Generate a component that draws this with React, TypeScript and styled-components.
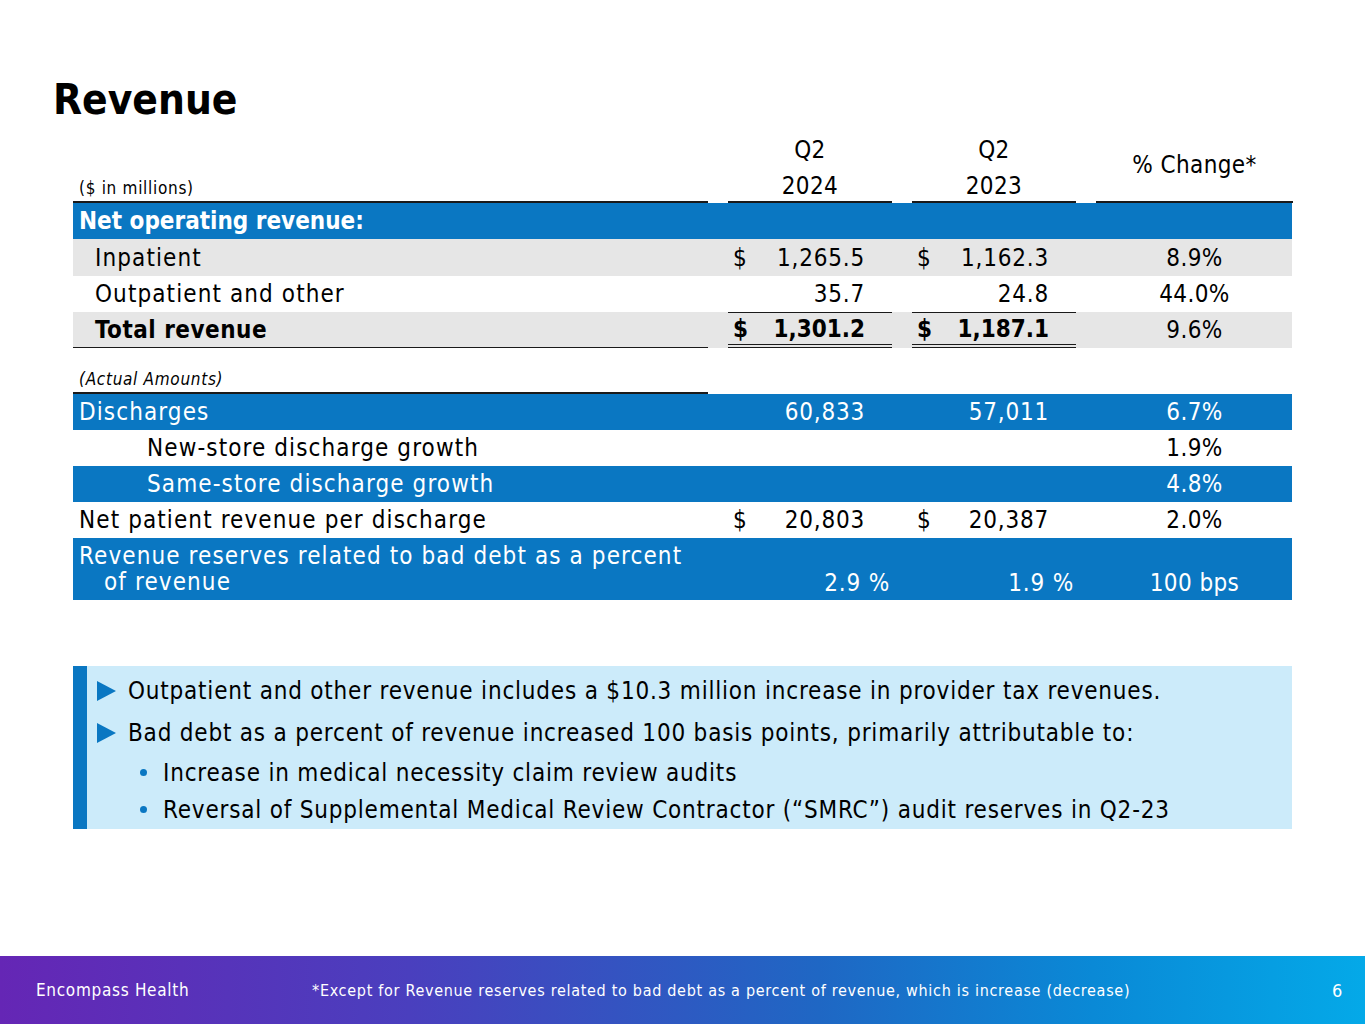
import React from "react";
import styled, { createGlobalStyle, css } from "styled-components";

const Global = createGlobalStyle`
  html, body { margin: 0; padding: 0; background: #fff; }
  body {
    font-family: "DejaVu Sans Condensed", "DejaVu Sans", sans-serif;
    font-stretch: condensed;
    color: #000;
    letter-spacing: 0.8px;
  }
`;

const BLUE = "#0a77c2";

const Page = styled.div`
  width: 1365px;
  height: 1024px;
  display: flex;
  flex-direction: column;
  overflow: hidden;
`;

const Main = styled.main`
  flex: 1;
  display: flex;
  flex-direction: column;
  padding: 70px 73px 0 73px;
`;

const Title = styled.h1`
  margin: 0 0 0 -20px;
  font-size: 42px;
  font-weight: 700;
  line-height: 60px;
  letter-spacing: 0;
  color: #000;
`;

const Table = styled.div`
  margin-top: 5px;
  width: 1219px;
  display: flex;
  flex-direction: column;
`;

const Row = styled.div<{ $bg?: "blue" | "grey" | "white"; $h?: number }>`
  display: grid;
  grid-template-columns: 635px 164px 164px 197px;
  column-gap: 20px;
  height: ${(p) => p.$h ?? 36}px;
  background: ${(p) =>
    p.$bg === "blue" ? BLUE : p.$bg === "grey" ? "#e6e6e6" : "#fff"};
  color: ${(p) => (p.$bg === "blue" ? "#fff" : "#000")};
  font-size: 24px;
`;

const HeaderRow = styled.div`
  display: grid;
  grid-template-columns: 635px 164px 164px 197px;
  grid-template-rows: 68px;
  column-gap: 20px;
  height: 68px;
`;

const HeadCell = styled.div<{ $align?: "left" | "center" | "end"; $pb?: number }>`
  box-sizing: border-box;
  min-height: 0;
  border-bottom: 2px solid #1a1a1a;
  display: flex;
  flex-direction: column;
  justify-content: ${(p) => (p.$align === "center" ? "center" : "flex-end")};
  align-items: ${(p) => (p.$align === "left" ? "flex-start" : "center")};
  font-size: 24px;
  line-height: 36px;
  letter-spacing: 0.4px;
  padding-bottom: ${(p) => p.$pb ?? 0}px;
`;

const HeadStack = styled.div`
  display: flex;
  flex-direction: column;
  align-items: center;
  margin-bottom: -3px;
`;

const SmallNote = styled.span<{ $italic?: boolean }>`
  font-size: 17px;
  line-height: 20px;
  letter-spacing: 0.7px;
  font-style: ${(p) => (p.$italic ? "italic" : "normal")};
  padding-left: 6px;
`;

const Label = styled.div<{ $indent?: number; $bold?: boolean }>`
  display: flex;
  align-items: center;
  padding-left: ${(p) => p.$indent ?? 6}px;
  font-weight: ${(p) => (p.$bold ? 700 : 400)};
  letter-spacing: ${(p) => (p.$bold ? "0" : "1.1px")};
  white-space: nowrap;
`;

const TwoLineLabel = styled.div`
  display: flex;
  flex-direction: column;
  justify-content: center;
  padding-left: 6px;
  line-height: 26px;
  letter-spacing: 1.1px;
  white-space: nowrap;
  & > span + span { padding-left: 25px; }
`;

const ValueCell = styled.div<{
  $top?: boolean;
  $double?: boolean;
  $bold?: boolean;
  $end?: boolean;
  $pr?: number;
}>`
  display: flex;
  align-items: ${(p) => (p.$end ? "flex-end" : "center")};
  justify-content: space-between;
  padding: 0 ${(p) => p.$pr ?? 27}px ${(p) => (p.$end ? "3px" : "0")} 5px;
  font-weight: ${(p) => (p.$bold ? 700 : 400)};
  letter-spacing: ${(p) => (p.$bold ? "0" : "0.8px")};
  ${(p) =>
    p.$top &&
    css`
      border-top: 1.5px solid #1a1a1a;
    `}
  ${(p) =>
    p.$double &&
    css`
      border-bottom: 4px double #1a1a1a;
    `}
`;

const PctCell = styled.div<{ $end?: boolean }>`
  display: flex;
  align-items: ${(p) => (p.$end ? "flex-end" : "center")};
  justify-content: center;
  letter-spacing: 0.4px;
  padding-bottom: ${(p) => (p.$end ? "3px" : "0")};
`;

const LabelLine = styled.div`
  border-bottom: 1.5px solid #1a1a1a;
  display: flex;
  align-items: center;
  padding-left: 22px;
  font-weight: 700;
  letter-spacing: 0.5px;
`;

const NoteRow = styled.div`
  display: grid;
  grid-template-columns: 635px 1fr;
  height: 46px;
`;

const NoteCell = styled.div`
  border-bottom: 2px solid #1a1a1a;
  display: flex;
  align-items: flex-end;
  padding-bottom: 3px;
`;

const Callout = styled.section`
  margin-top: 66px;
  width: 1219px;
  box-sizing: border-box;
  background: #ccebfa;
  border-left: 14px solid ${BLUE};
  padding: 4px 0 1px 10px;
  display: flex;
  flex-direction: column;
`;

const Bullet = styled.div<{ $sub?: boolean }>`
  display: flex;
  align-items: center;
  font-size: 24px;
  height: ${(p) => (p.$sub ? 37 : 42)}px;
  padding-left: ${(p) => (p.$sub ? 43 : 0)}px;
  gap: ${(p) => (p.$sub ? 16 : 12)}px;
  white-space: nowrap;
`;

const Tri = styled.span`
  width: 0;
  height: 0;
  border-top: 10px solid transparent;
  border-bottom: 10px solid transparent;
  border-left: 19px solid ${BLUE};
  flex: none;
`;

const Dot = styled.span`
  width: 7px;
  height: 7px;
  border-radius: 50%;
  background: ${BLUE};
  flex: none;
`;

const Footer = styled.footer`
  height: 68px;
  flex: none;
  background: linear-gradient(90deg, #6526b5 0%, #4a3fbe 30%, #1f67c4 60%, #0a89d6 80%, #04a9e8 100%);
  color: #fff;
  display: flex;
  align-items: center;
  padding: 0 22px 0 36px;
  font-size: 17px;
  letter-spacing: 0.7px;
`;

const Brand = styled.span`
  width: 276px;
  flex: none;
`;

const Footnote = styled.span`
  font-size: 16px;
  flex: 1;
  white-space: nowrap;
`;

const PageNum = styled.span`
  font-size: 18px;
`;

export default function App() {
  return (
    <Page>
      <Global />
      <Main>
        <Title>Revenue</Title>
        <Table>
          <HeaderRow>
            <HeadCell $align="left" $pb={3}>
              <SmallNote>($ in millions)</SmallNote>
            </HeadCell>
            <HeadCell $align="end">
              <HeadStack>
                <span>Q2</span>
                <span>2024</span>
              </HeadStack>
            </HeadCell>
            <HeadCell $align="end">
              <HeadStack>
                <span>Q2</span>
                <span>2023</span>
              </HeadStack>
            </HeadCell>
            <HeadCell $align="center" $pb={6}>
              <span>% Change*</span>
            </HeadCell>
          </HeaderRow>
          <Row $bg="blue">
            <Label $bold>Net operating revenue:</Label>
          </Row>
          <Row $bg="grey" $h={37}>
            <Label $indent={22}>Inpatient</Label>
            <ValueCell>
              <span>$</span>
              <span>1,265.5</span>
            </ValueCell>
            <ValueCell>
              <span>$</span>
              <span>1,162.3</span>
            </ValueCell>
            <PctCell>8.9%</PctCell>
          </Row>
          <Row $bg="white">
            <Label $indent={22}>Outpatient and other</Label>
            <ValueCell>
              <span />
              <span>35.7</span>
            </ValueCell>
            <ValueCell>
              <span />
              <span>24.8</span>
            </ValueCell>
            <PctCell>44.0%</PctCell>
          </Row>
          <Row $bg="grey" $h={36}>
            <LabelLine>Total revenue</LabelLine>
            <ValueCell $top $double $bold>
              <span>$</span>
              <span>1,301.2</span>
            </ValueCell>
            <ValueCell $top $double $bold>
              <span>$</span>
              <span>1,187.1</span>
            </ValueCell>
            <PctCell>9.6%</PctCell>
          </Row>
          <NoteRow>
            <NoteCell>
              <SmallNote $italic>(Actual Amounts)</SmallNote>
            </NoteCell>
          </NoteRow>
          <Row $bg="blue">
            <Label>Discharges</Label>
            <ValueCell>
              <span />
              <span>60,833</span>
            </ValueCell>
            <ValueCell>
              <span />
              <span>57,011</span>
            </ValueCell>
            <PctCell>6.7%</PctCell>
          </Row>
          <Row $bg="white">
            <Label $indent={74}>New-store discharge growth</Label>
            <div />
            <div />
            <PctCell>1.9%</PctCell>
          </Row>
          <Row $bg="blue">
            <Label $indent={74}>Same-store discharge growth</Label>
            <div />
            <div />
            <PctCell>4.8%</PctCell>
          </Row>
          <Row $bg="white">
            <Label>Net patient revenue per discharge</Label>
            <ValueCell>
              <span>$</span>
              <span>20,803</span>
            </ValueCell>
            <ValueCell>
              <span>$</span>
              <span>20,387</span>
            </ValueCell>
            <PctCell>2.0%</PctCell>
          </Row>
          <Row $bg="blue" $h={62}>
            <TwoLineLabel>
              <span>Revenue reserves related to bad debt as a percent</span>
              <span>of revenue</span>
            </TwoLineLabel>
            <ValueCell $end $pr={2}>
              <span />
              <span>2.9 %</span>
            </ValueCell>
            <ValueCell $end $pr={2}>
              <span />
              <span>1.9 %</span>
            </ValueCell>
            <PctCell $end>100 bps</PctCell>
          </Row>
        </Table>
        <Callout>
          <Bullet>
            <Tri />
            <span>Outpatient and other revenue includes a $10.3 million increase in provider tax revenues.</span>
          </Bullet>
          <Bullet>
            <Tri />
            <span>Bad debt as a percent of revenue increased 100 basis points, primarily attributable to:</span>
          </Bullet>
          <Bullet $sub>
            <Dot />
            <span>Increase in medical necessity claim review audits</span>
          </Bullet>
          <Bullet $sub>
            <Dot />
            <span>Reversal of Supplemental Medical Review Contractor (“SMRC”) audit reserves in Q2-23</span>
          </Bullet>
        </Callout>
      </Main>
      <Footer>
        <Brand>Encompass Health</Brand>
        <Footnote>
          *Except for Revenue reserves related to bad debt as a percent of revenue, which is increase (decrease)
        </Footnote>
        <PageNum>6</PageNum>
      </Footer>
    </Page>
  );
}
